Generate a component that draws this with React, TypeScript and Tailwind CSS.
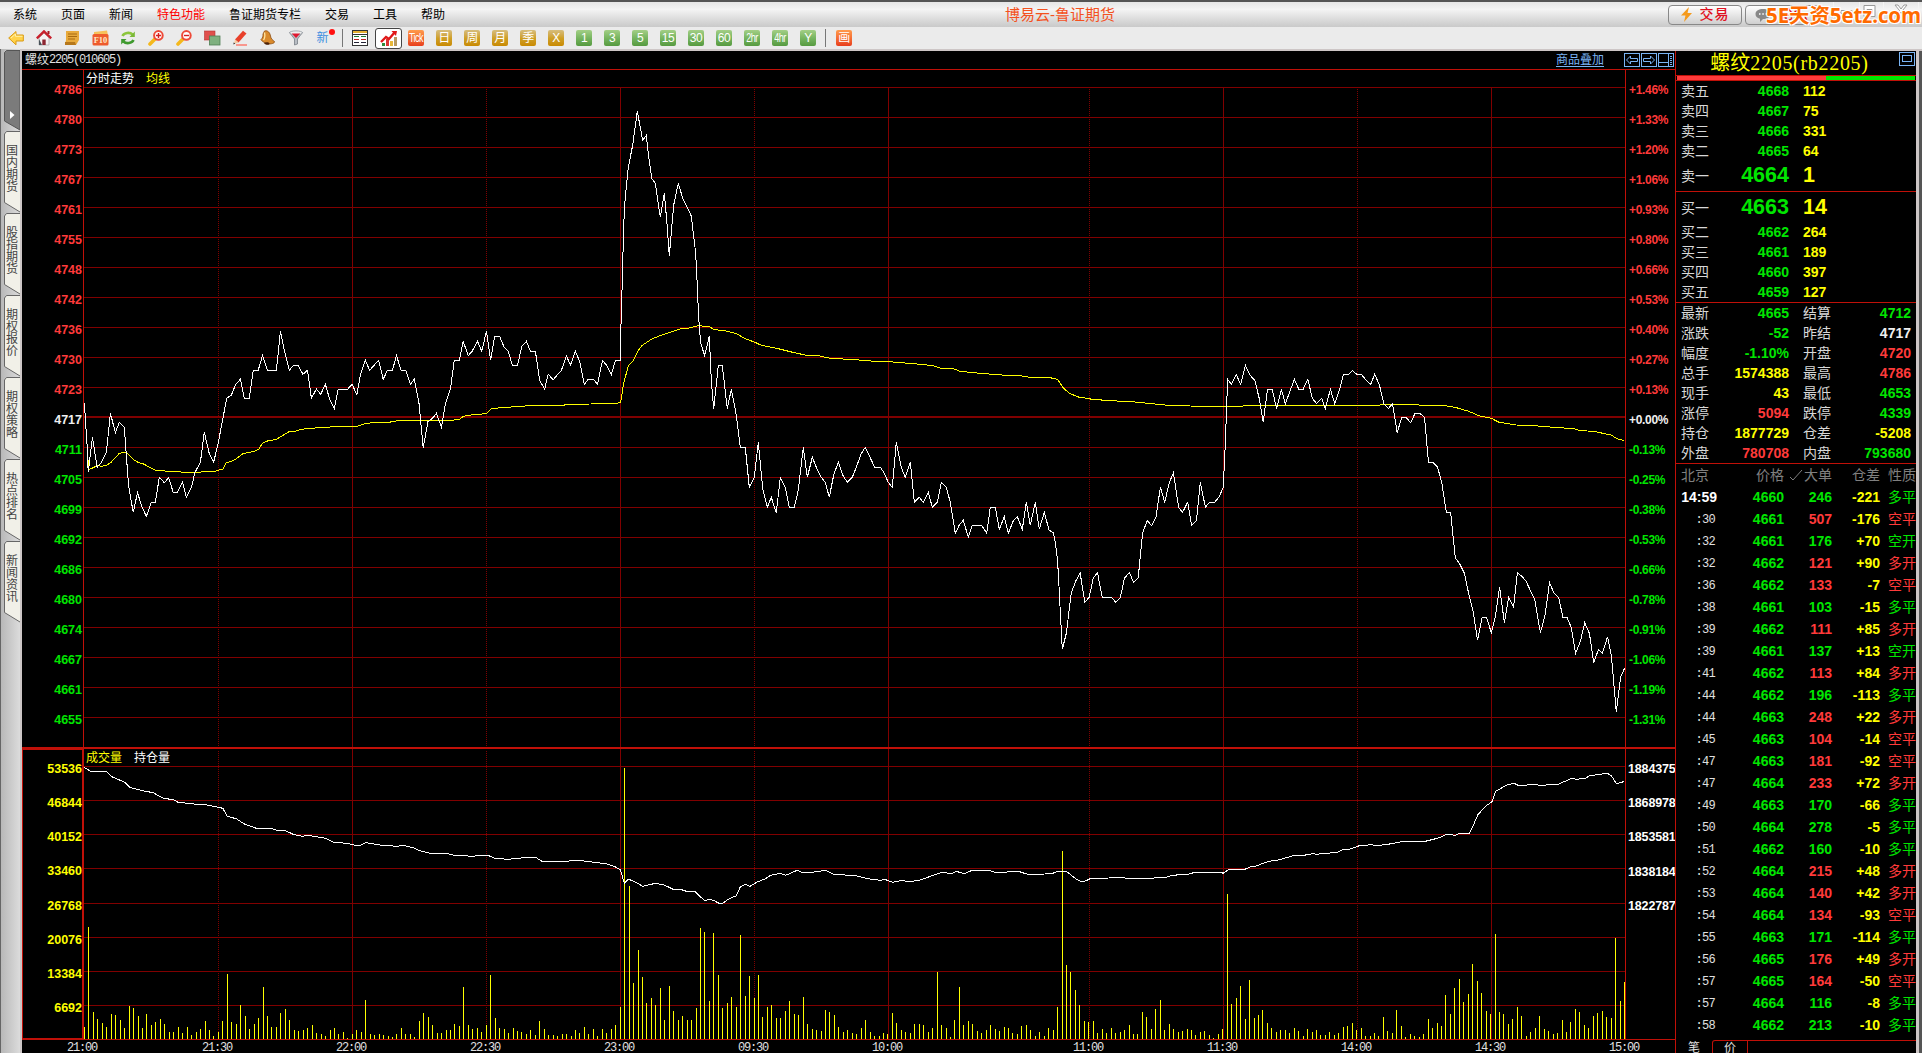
import React from "react";

const CJK = "font-['Liberation_Sans','Noto_Sans_CJK_SC',sans-serif]";
const MONO = "font-['Liberation_Mono','Noto_Sans_CJK_SC',monospace]";

/* ---------- chart data ---------- */

// Maps a flat list of sampled pairs onto canvas coordinates.
const trace = (ox: number, oy: number, sx: number, sy: number, v: number[]) => {
  const out: string[] = [];
  for (let i = 0; i < v.length; i += 2) {
    out.push(`${(ox + v[i] / sx).toFixed(1)},${(oy + v[i + 1] / sy).toFixed(1)}`);
  }
  return out.join(" ");
};

const price = [
  trace(80, 300, 2.8, 3, [
    12, 308, 20, 435, 23, 517, 35, 412, 48, 502, 60, 487, 74, 457, 85, 340, 99, 398, 110, 367, 124, 382, 129, 457, 136, 557, 149, 637, 161, 578,
    174, 622, 186, 649, 200, 607, 211, 607, 222, 532, 236, 548, 248, 533, 261, 577, 273, 577, 287, 547, 298, 592, 312, 562, 322, 517, 337, 487,
    348, 397, 361, 457, 374, 487, 387, 430, 398, 367, 411, 295, 424, 285, 436, 253, 449, 238, 460, 295, 474, 295, 485, 211, 499, 211, 511, 167,
    525, 211, 550, 211, 561, 94, 574, 160, 586, 211, 598, 196, 611, 196, 624, 223, 637, 211, 648, 295, 662, 267, 674, 283, 687, 253, 699, 297,
    712, 325, 723, 268, 749, 268, 762, 253, 775, 284, 785, 225, 799, 181, 811, 211, 836, 181, 849, 238, 861, 211, 875, 211, 886, 166, 899, 211,
    912, 211, 925, 253, 936, 238, 949, 307, 961, 443, 974, 365, 987, 355, 998, 340, 1012, 382, 1023, 312, 1037, 268, 1048, 181, 1062, 181,
    1073, 124, 1087, 167, 1098, 154, 1113, 124, 1125, 154, 1138, 94, 1150, 181, 1161, 109, 1175, 109, 1187, 140, 1199, 154, 1211, 197, 1225, 197,
    1237, 139, 1250, 124, 1261, 154, 1275, 154, 1287, 240, 1301, 268, 1311, 223, 1325, 239, 1348, 211, 1362, 167, 1373, 196, 1387, 154, 1399, 184,
    1412, 253, 1423, 238, 1438, 238, 1449, 253, 1463, 181, 1476, 198, 1488, 223, 1499, 181, 1513, 181,
  ]),
  trace(600, 80, 3, 3, [
    62, 842, 62, 760, 65, 670, 68, 550, 71, 440, 74, 372, 82, 290, 85, 262, 98, 195, 112, 94, 128, 181, 139, 166, 146, 230, 155, 295, 166, 310,
    181, 412, 193, 340, 200, 420, 208, 527, 221, 375, 235, 310, 248, 355, 262, 383, 274, 408, 287, 520, 291, 600, 296, 715, 302, 790, 314, 827,
    328, 769, 334, 900, 341, 986, 355, 857, 367, 857, 382, 986, 394, 928, 409, 1005, 421, 1102, 436, 1102, 448, 1222, 463, 1192, 475, 1087,
    488, 1225, 502, 1282, 514, 1252, 529, 1298, 541, 1192, 556, 1222, 568, 1282, 583, 1282, 595, 1230, 610, 1102, 622, 1192, 637, 1132, 650, 1165,
    662, 1190, 676, 1207, 688, 1252, 701, 1185, 715, 1147, 728, 1185, 742, 1207, 757, 1192, 769, 1162, 783, 1122, 796, 1102, 824, 1162, 841, 1162,
    852, 1178, 865, 1207, 877, 1222, 889, 1087, 904, 1162, 916, 1192, 931, 1147, 943, 1267, 958, 1252, 970, 1267, 985, 1237, 997, 1282, 1012, 1267,
    1024, 1207, 1039, 1222, 1051, 1267, 1066, 1360, 1078, 1335, 1090, 1321, 1105, 1372, 1117, 1336, 1145, 1336, 1160, 1360, 1171, 1282, 1186, 1282,
    1198, 1348, 1213, 1310, 1225, 1360, 1240, 1322, 1252, 1310, 1267, 1348, 1279, 1267, 1291, 1336, 1306, 1267, 1318, 1348, 1333, 1297, 1347, 1350,
    1360, 1358,
  ]),
  trace(1020, 340, 2.529, 3, [
    84, 578, 88, 600, 93, 640, 97, 700, 100, 770, 107, 928, 117, 880, 130, 757, 141, 723, 152, 698, 164, 787, 175, 772, 185, 714, 196, 698,
    208, 772, 232, 772, 242, 787, 254, 772, 264, 714, 277, 698, 287, 727, 299, 713, 305, 640, 310, 578, 322, 542, 333, 557, 344, 530, 355, 442,
    366, 487, 377, 430, 388, 398, 401, 502, 411, 517, 424, 487, 434, 556, 446, 542, 456, 427, 469, 502, 479, 487, 492, 487, 503, 472, 514, 443,
    519, 320, 525, 118, 535, 133, 547, 104, 558, 133, 570, 76, 581, 104, 594, 122, 605, 175, 615, 247, 626, 148, 638, 148, 649, 206, 661, 148,
    671, 192, 683, 152, 694, 118, 705, 148, 716, 148, 728, 118, 739, 174, 750, 191, 763, 175, 772, 206, 785, 148, 796, 191, 808, 150, 818, 104,
    831, 104, 841, 92, 853, 104, 864, 104, 875, 120, 887, 133, 897, 103, 909, 135, 920, 191, 932, 205, 942, 191, 954, 278, 965, 233, 977, 233,
    988, 248, 999, 220, 1011, 220, 1023, 232, 1033, 367, 1044, 367, 1056, 382, 1067, 430, 1078, 517, 1089, 517, 1101, 653, 1112, 672, 1124, 700,
    1135, 763, 1147, 820, 1157, 901, 1169, 832, 1180, 832, 1192, 878, 1202, 830, 1213, 742, 1225, 848, 1236, 772, 1248, 802, 1258, 698, 1270, 710,
    1280, 724, 1302, 780, 1316, 878, 1328, 825, 1339, 728, 1350, 758, 1362, 772, 1373, 832, 1383, 832, 1394, 862, 1405, 940, 1417, 905, 1428, 848,
    1440, 880, 1451, 968, 1463, 928, 1473, 940, 1486, 890, 1496, 950, 1508, 1117, 1519, 1010, 1529, 985,
  ]),
].join(" ");

const average = [
  trace(80, 300, 2.8, 3, [
    20, 435, 24, 509, 33, 505, 48, 497, 62, 499, 75, 495, 87, 487, 110, 460, 129, 457, 149, 478, 162, 487, 178, 492, 211, 511, 248, 514, 296, 517,
    336, 517, 348, 514, 378, 514, 400, 507, 409, 489, 424, 484, 436, 477, 456, 461, 488, 454, 501, 447, 511, 430, 525, 423, 550, 418, 585, 395,
    602, 394, 620, 388, 648, 385, 685, 382, 735, 379, 775, 379, 799, 371, 825, 367, 865, 367, 895, 361, 1040, 361, 1062, 358, 1074, 349, 1100, 344,
    1138, 341, 1152, 326, 1180, 323, 1220, 320, 1258, 317, 1355, 316, 1360, 313, 1430, 312, 1505, 310, 1513, 307,
  ]),
  trace(600, 80, 3, 3, [
    62, 967, 70, 915, 85, 857, 100, 842, 112, 816, 125, 797, 155, 777, 180, 767, 212, 756, 248, 745, 268, 744, 296, 737, 328, 740, 343, 749,
    374, 752, 409, 761, 436, 776, 463, 786, 484, 796, 530, 805, 583, 818, 620, 826, 656, 827, 690, 835, 765, 839, 840, 845, 880, 846, 950, 852,
    1000, 857, 1022, 865, 1060, 866, 1080, 874, 1140, 880, 1205, 885, 1260, 887, 1290, 892, 1350, 893, 1373, 898, 1388, 922, 1408, 940, 1438, 952,
    1470, 956,
  ]),
  trace(1020, 340, 2.529, 3, [
    176, 177, 215, 181, 290, 186, 375, 196, 430, 198, 520, 200, 530, 201, 575, 197, 910, 196, 915, 193, 945, 194, 1070, 196, 1100, 202, 1135, 214,
    1160, 227, 1192, 235, 1210, 246, 1255, 255, 1300, 257, 1350, 262, 1400, 266, 1415, 271, 1455, 275, 1495, 285, 1510, 296, 1528, 302,
  ]),
].join(" ");

const openInterest = [
  trace(0, 730, 2.45, 3, [
    206, 112, 222, 124, 261, 124, 274, 140, 306, 157, 318, 172, 345, 181, 375, 188, 400, 205, 425, 209, 436, 217, 475, 222, 503, 224, 546, 235,
    556, 258, 580, 267, 600, 283, 628, 295, 665, 295, 678, 301, 700, 302, 720, 314, 742, 319, 755, 316, 797, 325, 818, 337, 850, 340, 870, 346,
    882, 346, 896, 338, 935, 346, 975, 349, 987, 346, 1012, 353, 1028, 362, 1055, 370, 1095, 370, 1112, 376, 1160, 379, 1170, 376, 1195, 376,
    1212, 385, 1245, 388, 1295, 382, 1312, 382, 1328, 394, 1390, 394, 1405, 391, 1430, 393, 1485, 401, 1505, 409, 1520, 420,
  ]),
  trace(600, 740, 2.8, 3, [
    58, 392, 68, 430, 79, 417, 100, 427, 120, 439, 155, 430, 180, 435, 205, 448, 225, 448, 242, 454, 265, 454, 293, 482, 305, 478, 318, 481,
    335, 491, 344, 489, 362, 476, 382, 467, 393, 440, 408, 433, 420, 439, 440, 426, 460, 418, 478, 406, 505, 400, 520, 406, 552, 391, 570, 399,
    600, 396, 632, 391, 655, 403, 715, 407, 755, 417, 785, 421, 797, 418, 820, 427, 845, 421, 865, 425, 897, 420, 930, 407, 957, 397, 985, 401,
    997, 394, 1020, 401, 1042, 391, 1088, 391, 1105, 397, 1175, 395, 1197, 403, 1245, 402, 1270, 399, 1282, 394, 1307, 395, 1332, 416, 1345, 424,
    1357, 424, 1375, 415, 1425, 414, 1460, 412,
  ]),
  trace(1120, 740, 2.8, 3, [
    20, 415, 80, 415, 130, 412, 145, 406, 190, 403, 210, 397, 283, 397, 289, 400, 305, 388, 350, 388, 365, 380, 380, 379, 400, 370, 425, 362,
    440, 361, 485, 347, 515, 346, 540, 341, 550, 343, 608, 337, 625, 328, 645, 327, 670, 317, 705, 314, 720, 317, 755, 312, 795, 304, 855, 304,
    895, 293, 915, 283, 940, 286, 950, 280, 977, 282, 988, 259, 1002, 224, 1025, 197, 1041, 186, 1052, 154, 1085, 134, 1103, 130, 1115, 136,
    1165, 134, 1177, 136, 1227, 133, 1265, 115, 1278, 118, 1303, 115, 1315, 107, 1365, 100, 1376, 107, 1390, 131, 1405, 127, 1411, 124,
  ]),
].join(" ");

// Bar tops per minute, measured down from a base of 927 (night) and 897 (day).
const nightTops = [
  890, 590, 846, 867, 879, 891, 852, 855, 870, 894, 828, 834, 858, 894, 852, 885, 876, 867, 882, 906, 906, 891, 909, 891, 915, 906, 897, 873, 900,
  918, 906, 873, 732, 876, 882, 825, 858, 897, 882, 864, 771, 858, 891, 891, 849, 837, 870, 900, 903, 900, 894, 885, 909, 912, 918, 900, 894, 912,
  906, 924, 912, 900, 906, 810, 912, 915, 912, 915, 918, 921, 912, 894, 912, 912, 921, 873, 849, 861, 885, 909, 909, 900, 900, 882, 888, 771, 885,
  897, 894, 906, 885, 735, 864, 894, 897, 909, 894, 903, 906, 912, 900, 915, 873, 897, 915, 915, 918, 912, 912, 918, 900, 909, 891, 912, 897, 918,
  897, 909, 897, 885,
];
const dayTops = [
  801, 84, 438, 729, 630, 711, 789, 774, 795, 744, 840, 738, 813, 840, 828, 840, 840, 804, 564, 576, 783, 579, 705, 804, 789, 771, 801, 585, 768,
  708, 774, 705, 831, 801, 795, 834, 834, 813, 783, 822, 825, 771, 852, 867, 870, 873, 810, 816, 825, 861, 876, 870, 879, 882, 864, 840, 876, 888,
  888, 879, 882, 819, 849, 870, 876, 879, 852, 852, 855, 876, 864, 696, 855, 864, 891, 840, 741, 855, 843, 852, 873, 879, 870, 855, 867, 873, 861,
  864, 879, 882, 858, 855, 870, 888, 876, 888, 864, 870, 801, 333, 675, 696, 750, 795, 843, 846, 843, 879, 867, 879, 864, 879, 876, 870, 855, 882,
  882, 816, 831, 867, 807, 780, 870, 852, 867, 876, 873, 867, 870, 885, 876, 873, 885, 894, 882, 867, 462, 792, 774, 738, 837, 720, 834, 825, 810,
  849, 864, 876, 870, 870, 879, 864, 873, 888, 867, 876, 870, 885, 885, 876, 885, 879, 861, 858, 849, 870, 864, 888, 888, 879, 888, 831, 873, 879,
  810, 858, 891, 882, 888, 891, 882, 837, 864, 849, 858, 765, 822, 744, 717, 786, 762, 672, 723, 759, 813, 822, 582, 816, 822, 852, 837, 801, 828,
  888, 876, 864, 828, 867, 873, 882, 879, 840, 876, 846, 807, 816, 855, 864, 828, 819, 813, 831, 834, 594, 783, 726,
];
const volumes = [...nightTops.map((t) => (927 - t) / 3), ...dayTops.map((t) => (897 - t) / 3)];
const minuteStep = 1540 / (volumes.length - 1);

const solidX = [352, 620, 888, 1223, 1491];
const dottedX = [218, 486, 754, 1089, 1357];
const volumeY = [766, 800, 834, 868, 903, 937, 971, 1005];

const times: [string, number][] = [
  ["21:00", 82], ["21:30", 217], ["22:00", 351], ["22:30", 485], ["23:00", 619], ["09:30", 753], ["10:00", 887],
  ["11:00", 1088], ["11:30", 1222], ["14:00", 1356], ["14:30", 1490], ["15:00", 1624],
];

const prices = [4786, 4780, 4773, 4767, 4761, 4755, 4748, 4742, 4736, 4730, 4723, 4717, 4711, 4705, 4699, 4692, 4686, 4680, 4674, 4667, 4661, 4655];
const percents = [
  "+1.46%", "+1.33%", "+1.20%", "+1.06%", "+0.93%", "+0.80%", "+0.66%", "+0.53%", "+0.40%", "+0.27%", "+0.13%", "+0.00%",
  "-0.13%", "-0.25%", "-0.38%", "-0.53%", "-0.66%", "-0.78%", "-0.91%", "-1.06%", "-1.19%", "-1.31%",
];
const volLabels = [53536, 46844, 40152, 33460, 26768, 20076, 13384, 6692];
const oiLabels = [1884375, 1868978, 1853581, 1838184, 1822787];

const R = "text-[#ff3a3a]";
const G = "text-[#00e600]";
const Y = "text-[#ffff00]";
const W = "text-[#f0f0f0]";
const levelColor = (i: number) => (i < 11 ? R : i === 11 ? W : G);

/* ---------- quote data ---------- */

const asks: [string, string, string][] = [["卖五", "4668", "112"], ["卖四", "4667", "75"], ["卖三", "4666", "331"], ["卖二", "4665", "64"]];
const bids: [string, string, string][] = [["买二", "4662", "264"], ["买三", "4661", "189"], ["买四", "4660", "397"], ["买五", "4659", "127"]];
const stats: [string, string, string, string, string, string][] = [
  ["最新", "4665", G, "结算", "4712", G],
  ["涨跌", "-52", G, "昨结", "4717", W],
  ["幅度", "-1.10%", G, "开盘", "4720", R],
  ["总手", "1574388", Y, "最高", "4786", R],
  ["现手", "43", Y, "最低", "4653", G],
  ["涨停", "5094", R, "跌停", "4339", G],
  ["持仓", "1877729", Y, "仓差", "-5208", Y],
  ["外盘", "780708", R, "内盘", "793680", G],
];
const ticks: [string, string, string, string, string, boolean][] = [
  ["14:59", "4660", "246", "-221", "多平", false],
  [":30", "4661", "507", "-176", "空平", true],
  [":32", "4661", "176", "+70", "空开", false],
  [":32", "4662", "121", "+90", "多开", true],
  [":36", "4662", "133", "-7", "空平", true],
  [":38", "4661", "103", "-15", "多平", false],
  [":39", "4662", "111", "+85", "多开", true],
  [":39", "4661", "137", "+13", "空开", false],
  [":41", "4662", "113", "+84", "多开", true],
  [":44", "4662", "196", "-113", "多平", false],
  [":44", "4663", "248", "+22", "多开", true],
  [":45", "4663", "104", "-14", "空平", true],
  [":47", "4663", "181", "-92", "空平", true],
  [":47", "4664", "233", "+72", "多开", true],
  [":49", "4663", "170", "-66", "多平", false],
  [":50", "4664", "278", "-5", "多平", false],
  [":51", "4662", "160", "-10", "多平", false],
  [":52", "4664", "215", "+48", "多开", true],
  [":53", "4664", "140", "+42", "多开", true],
  [":54", "4664", "134", "-93", "空平", true],
  [":55", "4663", "171", "-114", "多平", false],
  [":56", "4665", "176", "+49", "多开", true],
  [":57", "4665", "164", "-50", "空平", true],
  [":57", "4664", "116", "-8", "多平", false],
  [":58", "4662", "213", "-10", "多平", false],
];

/* ---------- toolbar ---------- */

const Cell = ({ children }: { children: React.ReactNode }) => <div className="flex h-[22px] w-7 shrink-0 items-center justify-center">{children}</div>;

const Magnifier = ({ minus }: { minus?: boolean }) => (
  <svg width="16" height="16" viewBox="0 0 16 16">
    <path d="M7 9 2 14" stroke="#f4b81c" strokeWidth="3.6" strokeLinecap="round" />
    <circle cx="10.4" cy="5.4" r="4.3" fill="#fff" stroke="#ee4a38" strokeWidth="2" />
    <path d={minus ? "M8 5.5h5" : "M8 5.5h5M10.5 3v5"} stroke="#d42020" strokeWidth="1.4" />
  </svg>
);

const leftIcons: React.ReactNode[] = [
  <svg width="16" height="16" viewBox="0 0 16 16"><path d="M.7 8 8 1.5V5h7.3v6H8v3.8z" fill="#ffd24a" stroke="#d99a12" /><path d="M3 8 7.5 4v2.3h7" stroke="#fff0a8" fill="none" /></svg>,
  <svg width="16" height="16" viewBox="0 0 16 16"><path d="M3 8v7h10V8L8 3z" fill="#f5f1f1" stroke="#999" strokeWidth=".6" /><path d="M.8 8.4 8 1.4l7.2 7" fill="none" stroke="#c9202c" strokeWidth="2.4" /><path d="M11.5 1h2v3h-2z" fill="#a51822" /><path d="M6.3 9.5h3.4V15H6.3z" fill="#8d2630" /><path d="M3 15V9l3 6z" fill="#475158" /></svg>,
  <svg width="16" height="16" viewBox="0 0 16 16"><path d="M2 1h13v9l-3 5H1l1-5z" fill="#e8aa3c" /><path d="M1 12h10l1 3H1z" fill="#b6781c" /><path d="M4 4h9M4 6.500h9M4 9h7" stroke="#a86a10" /></svg>,
  <svg width="17" height="16" viewBox="0 0 17 16"><path d="M2 2 15 .5l1 5H2z" fill="#f7c05a" /><rect x=".5" y="4" width="16" height="11.500" rx="1.500" fill="#ee5b2c" /><text x="8.500" y="13" textAnchor="middle" fontSize="8.500" fontWeight="bold" fontFamily="Liberation Serif" fill="#ffe9c8">F10</text></svg>,
  <svg width="16" height="16" viewBox="0 0 16 16" fill="none" strokeWidth="2.600"><path d="M2.500 6C4 2.500 10 2 12.500 4.500" stroke="#8cc63c" /><path d="M13.500 10C12 13.500 6 14 3.500 11.500" stroke="#3f9a2e" /><path d="M14.800 1.500v5.500H9.500z" fill="#7ab836" /><path d="M1.200 14.500V9H6.500z" fill="#3f9a2e" /></svg>,
  <Magnifier />,
  <Magnifier minus />,
  <svg width="17" height="16" viewBox="0 0 17 16"><rect x=".5" y="1" width="10.500" height="9" fill="#e0504c" stroke="#b53434" strokeWidth=".6" /><rect x="5.500" y="6" width="10.500" height="9" fill="#7fb07f" stroke="#517f55" strokeWidth=".8" /></svg>,
  <svg width="16" height="16" viewBox="0 0 16 16"><path d="m3 9.500 8-8.800 3.500 2.800-8 9z" fill="#e8402a" /><path d="m3 9.500 3.500 3L2 14z" fill="#f5c9a0" /><path d="m1.600 12.600 1.600 1L1.500 14.500z" fill="#222" /><path d="M4 15h11" stroke="#ff6a5c" strokeWidth="1.300" /></svg>,
  <svg width="16" height="16" viewBox="0 0 16 16"><path d="M4.500 1C8 0 10 3 10.500 6s2 4 4 5.500c.5 2-4 2.500-6 2.500S1 11 1 9.500C3 8 3 5.500 3 4z" fill="#d98a2c" stroke="#8b4d12" strokeWidth=".8" /><path d="M4.500 2.500C5 5 5 8 3.500 10" stroke="#ffe4a0" strokeWidth="1.300" fill="none" /><path d="M4 13c1.500-1 5-1 5.500.5S5 15.500 4 13" fill="#4d2208" /></svg>,
  <svg width="16" height="16" viewBox="0 0 16 16"><path d="M1.500 2.500 6.500 9v6l3-1V9l5-6.500z" fill="#b8bdc4" stroke="#6d747d" strokeWidth=".7" /><ellipse cx="8" cy="2.800" rx="6.500" ry="1.900" fill="#eee" stroke="#8a9098" strokeWidth=".7" /><path d="M3.800 3.500h8.400L8 8z" fill="#e01830" /></svg>,
];

const Badge = ({ label, tone }: { label: string; tone: string }) => (
  <div className={`flex h-4 w-4 items-center justify-center rounded-[2px] bg-linear-to-b text-white ${tone}`}>
    <span className={`whitespace-nowrap leading-none ${CJK} ${label.length > 2 ? "scale-y-135 text-[9px] tracking-[-0.5px]" : "text-[12px] tracking-[-0.5px]"}`}>{label}</span>
  </div>
);
const gold = "from-[#d6bd7c] via-[#cfa025] to-[#c98a00]";
const green = "from-[#a3cf86] via-[#77b560] to-[#569a40]";
const orange = "from-[#ff9a4c] to-[#e83c1c]";

const Toolbar = () => (
  <div className="flex h-[22px] shrink-0 items-center bg-[#ebebeb] pl-[2px]">
    {leftIcons.map((icon, i) => (
      <Cell key={i}>{icon}</Cell>
    ))}
    <Cell>
      <div className={`relative pr-[3px] text-[12px] leading-4 text-[#3d8fe0] ${CJK}`}>
        新
        <i className="absolute -right-[3px] -top-[1px] h-[6px] w-[6px] rounded-full bg-[#ff1010]" />
      </div>
    </Cell>
    <div className="flex h-[18px] w-[8px] shrink-0 pl-1"><div className="w-px bg-[#777]" /></div>
    <Cell>
      <svg width="16" height="16" viewBox="0 0 16 16" shapeRendering="crispEdges">
        <path d="M.5.500h15v15H.5z" fill="#fff" stroke="#333" />
        <path d="M1 1h14v2H1z" fill="#e6b030" /><path d="M1 4h14" stroke="#333" />
        <path d="M2 6.500h5M9 6.500h5" stroke="#208030" /><path d="M2 9.500h5M9 9.500h5" stroke="#c02020" /><path d="M2 12.500h5M9 12.500h5" stroke="#223" />
      </svg>
    </Cell>
    <Cell>
      <div className="flex h-[21px] w-[27px] items-center justify-center rounded-[3px] border border-[#444] bg-white">
        <svg width="17" height="17" viewBox="0 0 17 17">
          <path d="M2 13h3v3H2z" fill="#2e8b3a" /><path d="M6 9h3v7H6z" fill="#d33" /><path d="M10 11h3v5h-3z" fill="#e8b838" /><path d="M14 7h3v9h-3z" fill="#b89a60" />
          <path d="m1 12 5-5 3 2 6-7" stroke="#e01818" strokeWidth="2.400" fill="none" /><path d="M11.500 1H17l-1 5z" fill="#e01818" />
        </svg>
      </div>
    </Cell>
    <Cell><Badge label="Tick" tone={orange} /></Cell>
    {["日", "周", "月", "季", "X"].map((t) => (
      <Cell key={t}><Badge label={t} tone={gold} /></Cell>
    ))}
    {["1", "3", "5", "15", "30", "60", "2hr", "4hr", "Y"].map((t) => (
      <Cell key={t}><Badge label={t} tone={green} /></Cell>
    ))}
    <div className="flex h-[18px] w-[8px] shrink-0 pl-[3px]"><div className="w-px bg-[#777]" /></div>
    <Cell><Badge label="画" tone={orange} /></Cell>
  </div>
);

const menus = ["系统", "页面", "新闻", "特色功能", "鲁证期货专栏", "交易", "工具", "帮助"];

const TitleBar = () => (
  <div className="relative flex h-[27px] shrink-0 items-center border-t-2 border-[#555] bg-linear-to-b from-[#e6e6e6] via-[#f4f4f4] via-30% to-[#c9c9c9]">
    <div className={`flex w-[1005px] gap-6 pl-[13px] text-[12px] leading-5 text-black ${CJK}`}>
      {menus.map((m) => (
        <span key={m} className={m === "特色功能" ? "text-[#ff0000]" : ""}>{m}</span>
      ))}
    </div>
    <div className={`flex-1 text-[15px] leading-5 text-[#f4511e] ${CJK}`}>博易云-鲁证期货</div>
    <div className={`mr-[103px] flex gap-[3px] text-[14px] text-[#e01020] ${CJK}`}>
      <div className="flex h-5 w-[74px] items-center justify-center gap-2 rounded-[4px] border border-[#888] bg-linear-to-b from-white to-[#cfcfcf]">
        <svg width="11" height="15" viewBox="0 0 11 15"><path d="M8 0 0 8.500h4.500L3 15l8-9H6.500z" fill="#f59a1c" /></svg>
        <b className="font-medium tracking-[1px]">交易</b>
      </div>
      <div className="flex h-5 w-[74px] items-center justify-center gap-2 rounded-[4px] border border-[#888] bg-linear-to-b from-white to-[#cfcfcf]">
        <svg width="16" height="14" viewBox="0 0 16 14"><path d="M8 1c4 0 7.500 1.800 7.500 5S12 11 8 11l-3 3v-3.300C2 10 .5 8.500.5 6 .5 2.800 4 1 8 1" fill="#888" /><path d="M4 6h1.500M7.300 6h1.500M10.600 6h1.500" stroke="#fff" strokeWidth="1.500" /></svg>
        <b className="font-medium tracking-[1px]">论坛</b>
      </div>
    </div>
    <svg className="absolute right-[3px] top-0" width="86" height="18" viewBox="0 0 86 18" fill="#fff" stroke="#999">
      <path d="M.5 0v16M26.500 0v16M50.500 0v16M85.500 0v16" stroke="#f4f4f4" />
      <path d="M8 8.500h11v3H8zM31 3.500h11v11H31zM34 7.500h5v4h-5z" />
      <path d="m62 3 3 0 3 4 3-4h3l-4.500 5.500L74 14h-3l-3-4-3 4h-3l4.500-5.500z" />
    </svg>
    <div className="absolute right-px top-0 text-[20.5px] font-bold leading-[27px] tracking-[-0.1px] text-[#ff6a00] [text-shadow:1px_1px_0_#fff,-1px_-1px_0_#fff,1px_-1px_0_#fff,-1px_1px_0_#fff] font-['Open_Sans','Noto_Sans_CJK_SC',sans-serif]">
      5E天资5etz.com
    </div>
  </div>
);

/* ---------- side tabs ---------- */

const SideTabs = () => (
  <div className="flex w-[22px] shrink-0 flex-col border-l border-r-2 border-l-[#666] border-r-[#cdc6c6] bg-linear-to-r from-[#b8b8b8] to-[#dcdcdc] pl-[3px] pt-px">
    <svg width="16" height="81" viewBox="0 0 16 81" className="shrink-0">
      <path d="M.5 2.500 2.500.500H16V80L.5 71z" fill="#7b7b7b" stroke="#555" />
      <path d="m6 61 4.500 4L6 69z" fill="#fff" />
    </svg>
    {["国内期货", "股指期货", "期权报价", "期权策略", "热点排名", "新闻资讯"].map((t) => (
      <div key={t} className="relative h-[82px] shrink-0">
        <svg width="16" height="82" viewBox="0 0 16 82" className="absolute left-0 top-0">
          <path d="M16 .5H2.500L.5 3v68.500L16 81" fill="#f1f0e8" stroke="#666" />
        </svg>
        <div className={`relative w-[14px] break-all pl-[2px] pt-[14px] text-[12px] leading-[12px] text-[#444] ${CJK}`}>{t}</div>
      </div>
    ))}
  </div>
);

/* ---------- charts ---------- */

const Verticals = ({ y1, y2 }: { y1: number; y2: number }) => (
  <>
    {solidX.map((x) => <path key={x} d={`M${x + 0.5} ${y1}V${y2}`} stroke="#800000" />)}
    {dottedX.map((x) => <path key={x} d={`M${x + 0.5} ${y1 + 2}V${y2}`} stroke="#800000" strokeDasharray="1 1" />)}
  </>
);

const axisText = "text-[12.5px] font-bold font-['Liberation_Sans',sans-serif]";

const PriceChart = () => (
  <div className="flex h-[677px] shrink-0">
    <div className={`w-[61px] pr-px pt-[5px] text-right ${axisText}`}>
      {prices.map((p, i) => <div key={p} className={`h-[30px] leading-[30px] ${levelColor(i)}`}>{p}</div>)}
    </div>
    <div className="w-[1543px] border-x border-[#c01008]">
      <div className={`flex h-[17px] gap-3 pl-[2px] text-[12px] leading-[19px] ${CJK}`}>
        <span className="text-white">分时走势</span>
        <span className={Y}>均线</span>
      </div>
      <svg width="1541" height="660" viewBox="84 87 1541 660" shapeRendering="crispEdges" fill="none">
        {prices.map((p, i) =>
          i === 11 ? (
            <path key={p} d="M84 417H1625" stroke="#800000" strokeWidth="2" />
          ) : (
            <path key={p} d={`M84 ${87.5 + i * 30}H1625`} stroke="#800000" />
          ),
        )}
        <Verticals y1={87} y2={747} />
        <polyline points={average} stroke="#ffff00" />
        <polyline points={price} stroke="#fff" />
      </svg>
    </div>
    <div className={`pl-[3px] pt-[5px] tracking-[-0.3px] ${axisText} font-normal`}>
      {percents.map((p, i) => <div key={p} className={`h-[30px] text-[12px] font-bold leading-[30px] ${levelColor(i)}`}>{p}</div>)}
    </div>
  </div>
);

const VolumeChart = () => (
  <div className="flex h-[293px] shrink-0 border-b border-t-2 border-[#c01008]">
    <div className={`w-[61px] border border-[#c01008] pt-[2px] text-right ${axisText} ${Y}`}>
      {volLabels.map((v) => <div key={v} className="h-[34.15px] leading-[34px]">{v}</div>)}
    </div>
    <div className="relative w-[1543px] border-x border-[#c01008]">
      <svg className="block" width="1541" height="290" viewBox="84 749 1541 290" shapeRendering="crispEdges" fill="none">
        {volumeY.map((y) => <path key={y} d={`M84 ${y + 0.5}H1625`} stroke="#800000" />)}
        <Verticals y1={749} y2={1040} />
        {volumes.map((h, i) => (
          <rect key={i} x={Math.round(84 + i * minuteStep)} y={1039 - Math.round(h)} width="1" height={Math.round(h)} fill="#ffff00" />
        ))}
        <polyline points={openInterest} stroke="#fff" />
      </svg>
      <div className={`absolute left-[2px] top-0 flex gap-3 text-[12px] leading-[19px] ${CJK}`}>
        <span className={Y}>成交量</span>
        <span className="text-white">持仓量</span>
      </div>
    </div>
    <div className={`w-[49px] pl-[2px] pt-[3px] tracking-[-0.15px] ${axisText} text-white`}>
      {oiLabels.map((v) => <div key={v} className="h-[34.2px] leading-[34px]">{v}</div>)}
    </div>
  </div>
);

const ChartArea = () => (
  <div className="flex w-[1653px] shrink-0 flex-col bg-black">
    <div className="flex h-[19px] shrink-0 items-center border-b border-[#c01008] pl-[3px] text-[12px] text-[#e0e0e0]">
      <span className={`leading-[18px] ${CJK}`}>螺纹</span>
      <span className={`flex-1 tracking-[-1.2px] ${MONO}`}>2205(010605)</span>
      <span className={`mr-5 leading-[16px] text-[#7ab4f4] underline underline-offset-2 ${CJK}`}>商品叠加</span>
      <svg width="51" height="14" viewBox="0 0 51 14" fill="none" stroke="#7ab4f4" shapeRendering="crispEdges">
        <path d="M.5.500h15v13H.5zM17.500.500h15v13h-15zM34.500.500h15v13h-15z" />
        <path d="M2.500 7 6.500 3v2.500h7v3h-7V11zM30.500 7 26.500 3v2.500h-7v3h7V11z" shapeRendering="auto" />
        <path d="M34.500 9.500h10M44.500 1v12M46 3.500h2M46 5.500h2M46 7.500h2M46 9.500h2M46 11.500h2" />
      </svg>
    </div>
    <PriceChart />
    <VolumeChart />
    <svg width="1653" height="12" viewBox="22 1041 1653 12" fill="#e0e0e0" fontSize="12" fontFamily="Liberation Mono" letterSpacing="-1.2">
      {times.map(([t, x]) => <text key={t} x={x - 15} y="1052">{t}</text>)}
    </svg>
  </div>
);

/* ---------- quote panel ---------- */

const num = "font-bold font-['Liberation_Sans',sans-serif] text-[14px]";

const DepthRow = ({ row, big }: { row: [string, string, string]; big?: boolean }) => (
  <div className={`flex items-center ${big ? "h-[29px]" : "h-5"}`}>
    <span className={`w-[42px] text-[14px] leading-5 text-[#d8d8d8] ${CJK}`}>{row[0]}</span>
    <span className={`w-[66px] text-right ${num} ${G} ${big ? "text-[21.5px]!" : ""}`}>{row[1]}</span>
    <span className={`pl-[14px] ${num} ${Y} ${big ? "text-[21.5px]!" : ""}`}>{row[2]}</span>
  </div>
);

const QuotePanel = () => (
  <div className="flex w-[241px] shrink-0 flex-col border-l border-[#c01008] bg-black">
    <div className="relative flex h-6 shrink-0 items-center justify-center pr-[13px] text-[20px] text-[#ffff00]">
      <span className={`leading-6 ${CJK}`}>螺纹</span>
      <span className="leading-6 tracking-[0.7px] font-['Liberation_Serif',serif]">2205(rb2205)</span>
      <svg className="absolute right-[1px] top-[1px]" width="16" height="14" viewBox="0 0 16 14" fill="none" stroke="#7ab4f4" shapeRendering="crispEdges">
        <path d="M.5.500h15v13H.5zM3.500 3.500h9v6h-9z" />
      </svg>
    </div>
    <div className="flex h-[6px] shrink-0 border-y border-[#c01008] pl-px">
      <div className="w-[149px] bg-[#ff3a3a]" />
      <div className="w-[89px] bg-[#00e600]" />
    </div>
    <div className="h-[111px] shrink-0 border-b border-[#c01008] pl-[5px]">
      {asks.map((a) => <DepthRow key={a[0]} row={a} />)}
      <DepthRow row={["卖一", "4664", "1"]} big />
    </div>
    <div className="h-[111px] shrink-0 border-b border-[#c01008] pl-[5px] pt-px">
      <DepthRow row={["买一", "4663", "14"]} big />
      {bids.map((b) => <DepthRow key={b[0]} row={b} />)}
    </div>
    <div className="h-[161px] shrink-0 border-b border-[#c01008] pl-[5px]">
      {stats.map((s) => (
        <div key={s[0]} className="flex h-5 items-center">
          <span className={`w-[42px] text-[14px] leading-5 text-[#d8d8d8] ${CJK}`}>{s[0]}</span>
          <span className={`w-[66px] text-right ${num} ${s[2]}`}>{s[1]}</span>
          <span className={`w-[44px] pl-[14px] text-[14px] leading-5 text-[#d8d8d8] ${CJK}`}><span className="whitespace-nowrap">{s[3]}</span></span>
          <span className={`w-[78px] text-right ${num} ${s[5]}`}>{s[4]}</span>
        </div>
      ))}
    </div>
    <div className={`flex h-[22px] shrink-0 items-center pl-[5px] text-[14px] leading-5 text-[#808080] ${CJK}`}>
      <span className="w-[36px]">北京</span>
      <span className="w-[67px] text-right">价格</span>
      <svg className="ml-[5px]" width="15" height="14" viewBox="0 0 15 14" fill="none" stroke="#808080"><path d="m1 9 3 3L13 2" /></svg>
      <span className="w-[28px] text-right">大单</span>
      <span className="w-[48px] text-right">仓差</span>
      <span className="w-[36px] text-right">性质</span>
    </div>
    <div className="h-[554px] shrink-0">
      {ticks.map((t, i) => (
        <div key={i} className="flex h-[22px] items-center pl-[5px]">
          <span className={`w-[36px] text-right ${i === 0 ? `${num} text-white` : `pr-[2px] pt-[2px] text-[12px] text-[#e0e0e0] tracking-[-0.7px] ${MONO}`}`}>{t[0]}</span>
          <span className={`w-[67px] text-right ${num} ${G}`}>{t[1]}</span>
          <span className={`w-[48px] text-right ${num} ${t[5] ? R : G}`}>{t[2]}</span>
          <span className={`w-[48px] text-right ${num} ${Y}`}>{t[3]}</span>
          <span className={`w-[36px] text-right text-[14px] leading-5 ${CJK} ${t[5] ? R : G}`}>{t[4]}</span>
        </div>
      ))}
    </div>
    <div className={`flex h-[14px] shrink-0 overflow-hidden text-[12px] leading-[14px] text-[#e0e0e0] ${CJK}`}>
      <div className="w-9 pt-px text-center">笔</div>
      <div className="w-9 rounded-tl-[3px] border-x border-t border-[#c01008] text-center">价</div>
      <div className="flex-1 border-t border-[#c01008]" />
    </div>
  </div>
);

export default function App() {
  return (
    <div className="flex h-[1053px] w-[1922px] flex-col overflow-hidden bg-[#ebebeb]">
      <TitleBar />
      <Toolbar />
      <div className="flex min-h-0 flex-1">
        <SideTabs />
        <div className="flex flex-1 border-t-2 border-[#cdc6c6]">
          <ChartArea />
          <QuotePanel />
          <div className="flex-1 border-l-[3px] border-[#cdc6c6] bg-[#555]" />
        </div>
      </div>
    </div>
  );
}
